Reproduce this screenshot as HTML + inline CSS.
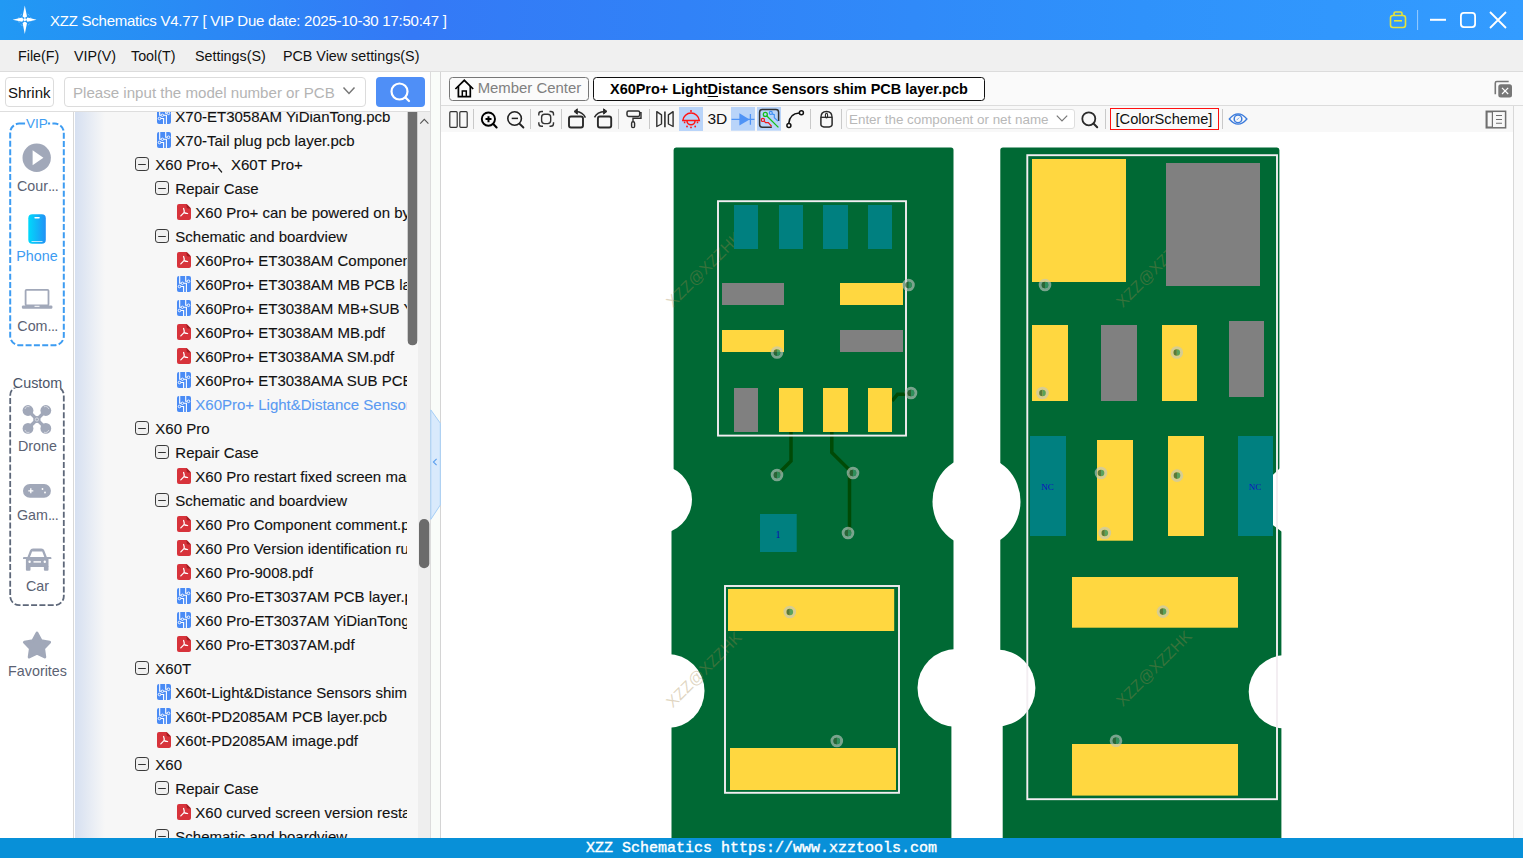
<!DOCTYPE html>
<html><head><meta charset="utf-8">
<style>
*{margin:0;padding:0;box-sizing:border-box}
html,body{width:1523px;height:858px;overflow:hidden;background:#fff;font-family:"Liberation Sans",sans-serif;color:#111}
.a{position:absolute}
svg{position:absolute;overflow:visible}
#title{left:0;top:0;width:1523px;height:40px;background:linear-gradient(to right,#2199f4 0%,#3479f6 27%,#3182f7 45%,#2f92fb 75%,#339cff 100%)}
#title .t{left:50px;top:11.6px;font-size:15px;line-height:17px;color:#fff;white-space:nowrap;letter-spacing:-0.245px}
#menu{left:0;top:40px;width:1523px;height:32px;background:#f0f0f0;border-bottom:1px solid #dcdcdc}
#menu span{position:absolute;top:8px;font-size:14.3px;color:#111;white-space:nowrap}
#srow{left:0;top:72px;width:430px;height:40px;background:#fff;border-bottom:1px solid #dedede}
#strip{left:430px;top:72px;width:11px;height:766px;background:#f9fcf9;border-left:1px solid #dcdcdc;border-right:1px solid #d4d4d4}
#nav{left:0;top:112px;width:74px;height:726px;background:#fff;border-right:1px solid #d8d8d8}
#tree{left:75px;top:112px;width:332px;height:726px;background:#f7f7f7;overflow:hidden}
#treegrad{left:75px;top:112px;width:30px;height:726px;background:linear-gradient(to right,#d6e0f1,#f7f7f7)}
#track{left:407px;top:112px;width:23px;height:726px;background:#f7f7f7}
#track2{left:418px;top:112px;width:12px;height:726px;background:#eeeeee}
#tabbar{left:441px;top:72px;width:1082px;height:34px;background:#fafafa;border-bottom:1px solid #dcdcdc}
#toolbar{left:441px;top:106px;width:1072px;height:26px;background:#f8f8f8}
#rstrip{left:1513px;top:106px;width:10px;height:732px;background:#f9f9f9;border-left:1px solid #d8d8d8}
#status{left:0;top:838px;width:1523px;height:20px;background:#0890d8;color:#fff;font-family:"Liberation Mono",monospace;font-weight:normal;font-size:15px;-webkit-text-stroke:0.4px #fff}
#status span{position:absolute;left:586px;top:2px;line-height:17px;white-space:nowrap}
.row{position:absolute;height:24px;white-space:nowrap;font-size:15px;color:#111}
.row span{position:absolute;top:3px}
.nl{position:absolute;font-size:14.3px;color:#5b6273;white-space:nowrap;text-align:center;width:74px;left:0;line-height:16px}
.tr{position:absolute;font-size:15px;line-height:17px;color:#111;white-space:nowrap;-webkit-text-stroke:0.12px #111}
.tr.sel{color:#5a9af2;-webkit-text-stroke:0.12px #5a9af2}
.ic{position:absolute}
</style></head><body>
<svg width="0" height="0" style="position:absolute">
 <defs>
  <symbol id="pdf" viewBox="0 0 14 16">
   <path d="M2 0 H9.6 L14 4.4 V14 Q14 16 12 16 H2 Q0 16 0 14 V2 Q0 0 2 0Z" fill="#d7333b"/>
   <path d="M9.6 0 L14 4.4 H11 Q9.6 4.4 9.6 3Z" fill="#a31c22"/>
   <path d="M6.6 4.5 Q7.6 7 7 8.6 M7 8.6 L3.8 11.9 M7 8.6 Q9 9.4 10.6 9.5" fill="none" stroke="#fff" stroke-width="1.25" stroke-linecap="round"/>
  </symbol>
  <symbol id="pcbi" viewBox="0 0 14 16">
   <rect width="14" height="16" rx="2" fill="#4a8bf5"/>
   <path d="M2.7 0 V7.3 H9.4 V16 M8.7 0 V5.2 H10.3 M2.5 10.5 H6.6 V16" stroke="#fff" stroke-width="1.1" fill="none"/>
   <circle cx="5.4" cy="7.3" r="1.2" fill="#4a8bf5" stroke="#fff" stroke-width=".9"/>
   <circle cx="11.5" cy="5.3" r="1.3" fill="#4a8bf5" stroke="#fff" stroke-width=".9"/>
   <circle cx="2.5" cy="10.5" r="1.3" fill="#4a8bf5" stroke="#fff" stroke-width=".9"/>
  </symbol>
  <symbol id="mbox" viewBox="0 0 14 14">
   <rect x=".5" y=".5" width="13" height="13" rx="2.6" fill="#f0f0f0" stroke="#3a3a3a" stroke-width="1"/>
   <path d="M3.2 7.5 H10.8" stroke="#333" stroke-width="1"/>
  </symbol>
 </defs>
</svg>

<!-- TITLE -->
<div id="title" class="a">
<svg width="30" height="32" style="left:10px;top:4px" viewBox="0 0 30 32">
 <circle cx="14.8" cy="15.7" r="6.3" fill="none" stroke="rgba(255,255,255,.35)" stroke-width="1" stroke-dasharray="2 2"/>
 <path d="M14.8 1.5 L17 12.5 L14.8 14 L12.6 12.5Z M14.8 30 L17 19 L14.8 17.4 L12.6 19Z M2.6 15.7 L12.2 13.6 L13.6 15.7 L12.2 17.8Z M26.6 15.7 L17.4 13.6 L16 15.7 L17.4 17.8Z" fill="#fff"/>
 <circle cx="14.8" cy="15.7" r="1.4" fill="#fff"/>
</svg>
<div class="a t">XZZ Schematics V4.77 [ VIP Due date: 2025-10-30 17:50:47 ]</div>
<svg width="133" height="40" style="left:1385px;top:0" viewBox="0 0 133 40">
 <rect x="5.5" y="15.5" width="15" height="12" rx="2.5" fill="none" stroke="#e6e43a" stroke-width="1.6"/>
 <path d="M9 15.5 V13.5 Q9 12 10.5 12 H15.5 Q17 12 17 13.5 V15.5" fill="none" stroke="#e6e43a" stroke-width="1.6"/>
 <path d="M9 20.8 H17" stroke="#e6e43a" stroke-width="1.6"/>
 <path d="M32.6 10 V30" stroke="rgba(255,255,255,.5)" stroke-width="1"/>
 <path d="M45 19.8 H61" stroke="#fff" stroke-width="2"/>
 <rect x="75.9" y="12.9" width="14.2" height="14.2" rx="3" fill="none" stroke="#fff" stroke-width="1.8"/>
 <path d="M105 12 L121 28 M121 12 L105 28" stroke="#fff" stroke-width="1.8"/>
</svg>
</div>
<!-- MENU -->
<div id="menu" class="a">
 <span style="left:18px">File(F)</span>
 <span style="left:74px">VIP(V)</span>
 <span style="left:131px">Tool(T)</span>
 <span style="left:195px">Settings(S)</span>
 <span style="left:283px">PCB View settings(S)</span>
</div>
<!-- SEARCH ROW -->
<div id="srow" class="a">
 <div class="a" style="left:5px;top:5px;width:49px;height:30px;border:1px solid #dcdcdc;border-radius:4px;background:#fff"></div>
 <div class="a" style="left:8px;top:12px;font-size:15px;color:#111">Shrink</div>
 <div class="a" style="left:64px;top:5px;width:302px;height:30px;border:1px solid #dcdcdc;border-radius:4px;background:#fff;overflow:hidden">
  <div class="a" style="left:8px;top:6px;font-size:15.1px;color:#b4b4b4;white-space:nowrap;width:262px;overflow:hidden">Please input the model number or PCB</div>
 </div>
 <svg width="14" height="10" style="left:342px;top:14px" viewBox="0 0 14 10"><path d="M1.5 1.5 L7 7.5 L12.5 1.5" fill="none" stroke="#777" stroke-width="1.5"/></svg>
 <div class="a" style="left:376px;top:5px;width:49px;height:30px;border-radius:4px;background:#4f8ff7"></div>
 <svg width="24" height="24" style="left:388px;top:8px" viewBox="0 0 24 24"><circle cx="11.5" cy="11.5" r="8" fill="none" stroke="#fff" stroke-width="2.2"/><path d="M17.5 17.5 L21 21" stroke="#fff" stroke-width="2.2" stroke-linecap="round"/></svg>
</div>
<div id="strip" class="a"></div>
<!-- NAV -->
<div id="nav" class="a">
<svg width="74" height="726" style="left:0;top:0" viewBox="0 112 74 726">
 <rect x="10.2" y="123.6" width="53.6" height="221.6" rx="9" fill="none" stroke="#3d9cf2" stroke-width="2" stroke-dasharray="6 2.3"/>
 <rect x="25.3" y="114" width="22.6" height="16" fill="#fff"/>
 <rect x="10.2" y="386.4" width="53.6" height="218.8" rx="9" fill="none" stroke="#5d6779" stroke-width="1.8" stroke-dasharray="6 2.3"/>
 <rect x="12.3" y="375" width="49.6" height="12.6" fill="#fff"/>
 <!-- play -->
 <circle cx="36.7" cy="157.7" r="14.2" fill="#a1a8b9"/>
 <path d="M32.6 150.2 L43.4 157.7 L32.6 165.2Z" fill="#fff"/>
 <!-- phone -->
 <defs><linearGradient id="phg" x1="0" x2="1" y1="0" y2="0"><stop offset="0" stop-color="#00d9fb"/><stop offset="1" stop-color="#2291f5"/></linearGradient></defs>
 <rect x="28.3" y="214.3" width="17.5" height="29.4" rx="4" fill="url(#phg)"/>
 <rect x="34.3" y="217" width="5.5" height="1.6" rx=".8" fill="#fff"/>
 <rect x="31.5" y="241" width="11" height=".9" fill="#cfefff"/>
 <!-- laptop -->
 <rect x="25.6" y="289.8" width="22.9" height="15.5" rx="1" fill="none" stroke="#a1a8b9" stroke-width="1.8"/>
 <rect x="21.9" y="305.4" width="30.5" height="3.3" rx="1.2" fill="#a1a8b9"/>
 <rect x="34.5" y="305.8" width="5" height="1" fill="#fff"/>
 <!-- drone -->
 <g fill="#a1a8b9">
  <path d="M28 410.5 L46 428.5 M46 410.5 L28 428.5" stroke="#a1a8b9" stroke-width="3.2"/>
  <circle cx="28" cy="410.5" r="5.4"/><circle cx="45.8" cy="410.5" r="5.4"/>
  <circle cx="28" cy="428.4" r="5.4"/><circle cx="45.8" cy="428.4" r="5.4"/>
  <circle cx="36.9" cy="419.5" r="3.6"/>
 </g>
 <g fill="none" stroke="#dfe2e9" stroke-width=".8">
  <path d="M25 409 A3.5 3.5 0 0 1 29.5 406.8"/><path d="M44 406.8 A3.5 3.5 0 0 1 48.8 409"/>
  <path d="M25 430 A3.5 3.5 0 0 0 29.5 432.2"/><path d="M44 432.2 A3.5 3.5 0 0 0 48.8 430"/>
  <circle cx="36.9" cy="419.5" r="1.6"/>
 </g>
 <!-- gamepad -->
 <rect x="23" y="484" width="27.9" height="13.7" rx="6.8" fill="#a1a8b9"/>
 <path d="M28.3 490.8 H33.3 M30.8 488.3 V493.3" stroke="#fff" stroke-width="1.3"/>
 <circle cx="42.5" cy="489" r=".9" fill="#fff"/><circle cx="45" cy="492.5" r=".9" fill="#fff"/>
 <!-- car -->
 <path d="M27.5 557 L30 550.5 Q30.7 548.5 33 548.5 H41.3 Q43.6 548.5 44.3 550.5 L46.8 557 H50.4 Q51.4 557 51.4 558 V559 H48.5 V567 H25.9 V559 H23 V558 Q23 557 24 557Z M30 557 H44.3 L42.2 551.5 H32.1Z" fill="#a1a8b9" fill-rule="evenodd"/>
 <rect x="25.9" y="566" width="4.6" height="4.7" rx="1" fill="#a1a8b9"/><rect x="43.9" y="566" width="4.6" height="4.7" rx="1" fill="#a1a8b9"/>
 <circle cx="29.6" cy="561.8" r="1.2" fill="#fff"/><circle cx="44.8" cy="561.8" r="1.2" fill="#fff"/>
 <rect x="33.5" y="561.2" width="7.5" height="1.4" fill="#fff"/>
 <!-- star -->
 <path d="M37.00 633.10 L41.06 640.72 L49.55 642.22 L43.56 648.43 L44.76 656.98 L37.00 653.20 L29.24 656.98 L30.44 648.43 L24.45 642.22 L32.94 640.72Z" fill="#a1a8b9" stroke="#a1a8b9" stroke-width="3" stroke-linejoin="round"/>
</svg>
<div class="nl" style="top:3.6px;color:#3d9cf2;font-size:13.5px">VIP</div>
<div class="nl" style="top:66px;left:0.5px">Cour<span style="letter-spacing:-0.6px">...</span></div>
<div class="nl" style="top:136px;color:#3d9cf2">Phone</div>
<div class="nl" style="top:206px;left:0.5px">Com<span style="letter-spacing:-0.6px">...</span></div>
<div class="nl" style="top:263px;left:0.5px;color:#4b5468">Custom</div>
<div class="nl" style="top:326px;left:0.5px">Drone</div>
<div class="nl" style="top:395px;left:0.5px">Gam<span style="letter-spacing:-0.6px">...</span></div>
<div class="nl" style="top:466px;left:0.5px">Car</div>
<div class="nl" style="top:551px;left:0.5px">Favorites</div>

</div>
<!-- TREE -->
<div id="tree" class="a">
<svg class="ic" width="14" height="16" style="left:82px;top:-4px"><use href="#pcbi"/></svg>
<div class="tr" style="left:100.3px;top:-3.7px">X70-ET3058AM YiDianTong.pcb</div>
<svg class="ic" width="14" height="16" style="left:82px;top:20px"><use href="#pcbi"/></svg>
<div class="tr" style="left:100.3px;top:20.3px">X70-Tail plug pcb layer.pcb</div>
<svg class="ic" width="14" height="14" style="left:60px;top:45px"><use href="#mbox"/></svg>
<div class="tr" style="left:80.3px;top:44.3px">X60 Pro+</div>
<svg class="ic" width="8" height="8" style="left:142px;top:54.5px"><path d="M1.6 1.4 L4.6 5" stroke="#222" stroke-width="1.3" stroke-linecap="round"/></svg>
<div class="tr" style="left:156px;top:44.3px">X60T Pro+</div>
<svg class="ic" width="14" height="14" style="left:80px;top:69px"><use href="#mbox"/></svg>
<div class="tr" style="left:100.3px;top:68.3px">Repair Case</div>
<svg class="ic" width="14" height="16" style="left:102px;top:92px"><use href="#pdf"/></svg>
<div class="tr" style="left:120.3px;top:92.3px">X60 Pro+ can be powered on by the charger but not boot</div>
<svg class="ic" width="14" height="14" style="left:80px;top:117px"><use href="#mbox"/></svg>
<div class="tr" style="left:100.3px;top:116.3px">Schematic and boardview</div>
<svg class="ic" width="14" height="16" style="left:102px;top:140px"><use href="#pdf"/></svg>
<div class="tr" style="left:120.3px;top:140.3px">X60Pro+ ET3038AM Component comment.pdf</div>
<svg class="ic" width="14" height="16" style="left:102px;top:164px"><use href="#pcbi"/></svg>
<div class="tr" style="left:120.3px;top:164.3px">X60Pro+ ET3038AM MB PCB layer.pcb</div>
<svg class="ic" width="14" height="16" style="left:102px;top:188px"><use href="#pcbi"/></svg>
<div class="tr" style="left:120.3px;top:188.3px">X60Pro+ ET3038AM MB+SUB YiDianTong.pcb</div>
<svg class="ic" width="14" height="16" style="left:102px;top:212px"><use href="#pdf"/></svg>
<div class="tr" style="left:120.3px;top:212.3px">X60Pro+ ET3038AM MB.pdf</div>
<svg class="ic" width="14" height="16" style="left:102px;top:236px"><use href="#pdf"/></svg>
<div class="tr" style="left:120.3px;top:236.3px">X60Pro+ ET3038AMA SM.pdf</div>
<svg class="ic" width="14" height="16" style="left:102px;top:260px"><use href="#pcbi"/></svg>
<div class="tr" style="left:120.3px;top:260.3px">X60Pro+ ET3038AMA SUB PCB layer.pcb</div>
<svg class="ic" width="14" height="16" style="left:102px;top:284px"><use href="#pcbi"/></svg>
<div class="tr sel" style="left:120.3px;top:284.3px">X60Pro+ Light&amp;Distance Sensors shim PCB layer.pcb</div>
<svg class="ic" width="14" height="14" style="left:60px;top:309px"><use href="#mbox"/></svg>
<div class="tr" style="left:80.3px;top:308.3px">X60 Pro</div>
<svg class="ic" width="14" height="14" style="left:80px;top:333px"><use href="#mbox"/></svg>
<div class="tr" style="left:100.3px;top:332.3px">Repair Case</div>
<svg class="ic" width="14" height="16" style="left:102px;top:356px"><use href="#pdf"/></svg>
<div class="tr" style="left:120.3px;top:356.3px">X60 Pro restart fixed screen main board</div>
<svg class="ic" width="14" height="14" style="left:80px;top:381px"><use href="#mbox"/></svg>
<div class="tr" style="left:100.3px;top:380.3px">Schematic and boardview</div>
<svg class="ic" width="14" height="16" style="left:102px;top:404px"><use href="#pdf"/></svg>
<div class="tr" style="left:120.3px;top:404.3px">X60 Pro Component comment.pdf</div>
<svg class="ic" width="14" height="16" style="left:102px;top:428px"><use href="#pdf"/></svg>
<div class="tr" style="left:120.3px;top:428.3px">X60 Pro Version identification rules.pdf</div>
<svg class="ic" width="14" height="16" style="left:102px;top:452px"><use href="#pdf"/></svg>
<div class="tr" style="left:120.3px;top:452.3px">X60 Pro-9008.pdf</div>
<svg class="ic" width="14" height="16" style="left:102px;top:476px"><use href="#pcbi"/></svg>
<div class="tr" style="left:120.3px;top:476.3px">X60 Pro-ET3037AM PCB layer.pcb</div>
<svg class="ic" width="14" height="16" style="left:102px;top:500px"><use href="#pcbi"/></svg>
<div class="tr" style="left:120.3px;top:500.3px">X60 Pro-ET3037AM YiDianTong.pcb</div>
<svg class="ic" width="14" height="16" style="left:102px;top:524px"><use href="#pdf"/></svg>
<div class="tr" style="left:120.3px;top:524.3px">X60 Pro-ET3037AM.pdf</div>
<svg class="ic" width="14" height="14" style="left:60px;top:549px"><use href="#mbox"/></svg>
<div class="tr" style="left:80.3px;top:548.3px">X60T</div>
<svg class="ic" width="14" height="16" style="left:82px;top:572px"><use href="#pcbi"/></svg>
<div class="tr" style="left:100.3px;top:572.3px">X60t-Light&amp;Distance Sensors shim PCB layer.pcb</div>
<svg class="ic" width="14" height="16" style="left:82px;top:596px"><use href="#pcbi"/></svg>
<div class="tr" style="left:100.3px;top:596.3px">X60t-PD2085AM PCB layer.pcb</div>
<svg class="ic" width="14" height="16" style="left:82px;top:620px"><use href="#pdf"/></svg>
<div class="tr" style="left:100.3px;top:620.3px">X60t-PD2085AM image.pdf</div>
<svg class="ic" width="14" height="14" style="left:60px;top:645px"><use href="#mbox"/></svg>
<div class="tr" style="left:80.3px;top:644.3px">X60</div>
<svg class="ic" width="14" height="14" style="left:80px;top:669px"><use href="#mbox"/></svg>
<div class="tr" style="left:100.3px;top:668.3px">Repair Case</div>
<svg class="ic" width="14" height="16" style="left:102px;top:692px"><use href="#pdf"/></svg>
<div class="tr" style="left:120.3px;top:692.3px">X60 curved screen version restart</div>
<svg class="ic" width="14" height="14" style="left:80px;top:717px"><use href="#mbox"/></svg>
<div class="tr" style="left:100.3px;top:716.3px">Schematic and boardview</div>
</div>
<div id="treegrad" class="a"></div>
<div id="track" class="a"></div>
<div id="track2" class="a"></div>
<!-- SCROLLBARS & COLLAPSE TABS -->
<svg width="1523" height="858" style="left:0;top:0" viewBox="0 0 1523 858">
 <path d="M407.7 112 H417.3 V340.5 Q417.3 345.3 412.5 345.3 Q407.7 345.3 407.7 340.5Z" fill="#6e6e6e"/>
 <path d="M420.2 123.6 L424.3 119.4 L428.4 123.6" fill="none" stroke="#555" stroke-width="1.1"/>
 <rect x="419" y="519" width="10.3" height="49.3" rx="5.1" fill="#6b6b6b"/>
 <path d="M430.8 409.9 L440.3 423.2 V505 L430.8 519.4Z" fill="#d9eafc" stroke="#a5cff7" stroke-width="1"/>
 <path d="M436.6 458.8 L433.4 462 L436.6 465.2" fill="none" stroke="#5b9fee" stroke-width="1.1"/>
 <path d="M1522.5 431.7 L1513.8 444.8 V528.7 L1522.5 540.9Z" fill="#d9eafc" stroke="#8fc5f7" stroke-width="1"/>
 <path d="M1519.6 485 L1516.3 488.2 L1519.6 491.4" fill="none" stroke="#4a90e8" stroke-width="1.2"/>
</svg>
<!-- TABBAR -->
<div id="tabbar" class="a"></div>
<div id="toolbar" class="a"></div>
<div id="rstrip" class="a"></div>
<!-- TABS -->
<div class="a" style="left:449px;top:77px;width:139.5px;height:24px;border:1px solid #777;border-radius:3.5px;background:#fbfbfb"></div>
<div class="a" style="left:477.7px;top:80px;font-size:14.9px;color:#808080;white-space:nowrap;line-height:17px">Member Center</div>
<div class="a" style="left:593px;top:77px;width:392px;height:24px;border:1.3px solid #111;border-radius:3.5px;background:#fff"></div>
<div class="a" style="left:610px;top:80.5px;font-size:14.46px;font-weight:bold;color:#000;white-space:nowrap;line-height:17px">X60Pro+ Light<u style="text-decoration-thickness:1px;text-underline-offset:2px">D</u>istance Sensors shim PCB layer.pcb</div>
<!-- toolbar input -->
<div class="a" style="left:845.5px;top:109px;width:229px;height:20px;border:1px solid #dedede;border-radius:3px;background:#fff;overflow:hidden">
 <div class="a" style="left:2.5px;top:1.5px;font-size:13.4px;color:#b8b8b8;white-space:nowrap;width:201px;overflow:hidden;line-height:15px">Enter the component or net name to search</div>
</div>
<div class="a" style="left:1110px;top:108px;width:109px;height:21.6px;border:1.5px solid #ff1010;background:#fafafa"></div>
<div class="a" style="left:1115.5px;top:111px;font-size:14.67px;color:#111;white-space:nowrap;line-height:17px">[ColorScheme]</div>
<div class="a" style="left:707.5px;top:110px;font-size:15.5px;color:#111;white-space:nowrap;line-height:17px">3D</div>
<svg width="1523" height="140" style="left:0;top:0" viewBox="0 0 1523 140">
 <!-- house -->
 <path d="M455.4 89 L464.3 80.3 L473.2 89" fill="none" stroke="#000" stroke-width="1.7" stroke-linejoin="miter"/>
 <path d="M458.4 86 V96.7 H470.3 V86" fill="none" stroke="#000" stroke-width="1.7"/>
 <path d="M462.3 96.7 V91 H466.3 V96.7" fill="none" stroke="#000" stroke-width="1.5"/>
 <!-- close all -->
 <path d="M1495.3 94.3 V83 Q1495.3 81.5 1496.8 81.5 H1508.7" fill="none" stroke="#777" stroke-width="1.6"/>
 <rect x="1498.3" y="84.2" width="13.7" height="13.3" rx="2.5" fill="#777"/>
 <path d="M1502 87.8 L1508.2 94 M1508.2 87.8 L1502 94" stroke="#fff" stroke-width="1.2"/>
 <!-- separators -->
 <g stroke="#c9c9c9" stroke-width="1">
  <path d="M473.5 109 V129"/><path d="M530.5 109 V129"/><path d="M561.5 109 V129"/><path d="M618.5 109 V129"/><path d="M649.5 109 V129"/>
  <path d="M810.5 109 V129"/><path d="M841.5 109 V129"/><path d="M1105.5 109 V129"/><path d="M1222.5 109 V129"/>
 </g>
 <!-- split -->
 <rect x="449.8" y="111.7" width="7.4" height="15.6" rx="1" fill="none" stroke="#333" stroke-width="1.2"/>
 <rect x="459.8" y="111.7" width="7.4" height="15.6" rx="1" fill="none" stroke="#333" stroke-width="1.2"/>
 <!-- zoom in -->
 <circle cx="488.4" cy="119.1" r="6.6" fill="none" stroke="#000" stroke-width="1.9"/>
 <path d="M485.5 119.1 H491.5 M488.5 116.2 V122.2" stroke="#000" stroke-width="2"/>
 <path d="M493.3 124.1 L496.6 127.4" stroke="#000" stroke-width="2.1" stroke-linecap="round"/>
 <!-- zoom out -->
 <circle cx="514.6" cy="118.5" r="6.8" fill="none" stroke="#222" stroke-width="1.6"/>
 <path d="M511.7 118.4 H518" stroke="#222" stroke-width="1.5"/>
 <path d="M519.8 124 L523.4 127.5" stroke="#222" stroke-width="1.9" stroke-linecap="round"/>
 <!-- fit -->
 <g fill="none" stroke="#333" stroke-width="1.4">
  <path d="M538.8 115.5 V114 Q538.8 111.5 541.5 111.5 H543"/>
  <path d="M549.5 111.5 H550.8 Q553.5 111.5 553.5 114 V115.5"/>
  <path d="M538.8 122.2 V123.5 Q538.8 126.3 541.5 126.3 H543"/>
  <path d="M549.5 126.3 H550.8 Q553.5 126.3 553.5 123.5 V122.2"/>
  <rect x="541.6" y="114.3" width="9.1" height="9.3" rx="3"/>
 </g>
 <!-- rotate L -->
 <rect x="569" y="116.5" width="14" height="11" rx="2" fill="none" stroke="#2a2a2a" stroke-width="1.9"/>
 <path d="M585.4 117.6 Q583 112 576 111.5" fill="none" stroke="#2a2a2a" stroke-width="1.5"/>
 <path d="M574 111.5 L577.3 108.8 L577.3 114.2Z" fill="#2a2a2a" stroke="#2a2a2a" stroke-width="1" stroke-linejoin="round"/>
 <!-- rotate R -->
 <rect x="597.9" y="116.5" width="13.3" height="11" rx="2" fill="none" stroke="#2a2a2a" stroke-width="1.9"/>
 <path d="M594.5 117.4 Q597 112 605 111.5" fill="none" stroke="#2a2a2a" stroke-width="1.5"/>
 <path d="M607 111.4 L603.6 108.8 L603.6 114.1Z" fill="#2a2a2a" stroke="#2a2a2a" stroke-width="1" stroke-linejoin="round"/>
 <!-- roller -->
 <rect x="627" y="110.9" width="12.7" height="5.5" rx="1.6" fill="none" stroke="#2f2f2f" stroke-width="1.5"/>
 <path d="M639.7 112.6 H641 V118.2 H633 V121.8" fill="none" stroke="#2f2f2f" stroke-width="1.4"/>
 <rect x="631.6" y="121.8" width="3" height="5.8" rx="1.4" fill="none" stroke="#2f2f2f" stroke-width="1.4"/>
 <!-- mirror -->
 <path d="M656.8 111.6 L661.5 114.8 V124 L656.8 126.5Z" fill="none" stroke="#2f2f2f" stroke-width="1.4" stroke-linejoin="round"/>
 <path d="M664.9 111.6 V127.2" stroke="#444" stroke-width="1.8"/>
 <path d="M673.1 111.6 L668.4 114.8 V124 L673.1 126.5Z" fill="none" stroke="#2f2f2f" stroke-width="1.4" stroke-linejoin="round"/>
 <!-- highlighted bg -->
 <rect x="679" y="107" width="24" height="24" fill="#b9d4f9"/>
 <rect x="731" y="107" width="24" height="23.7" fill="#b9d4f9"/>
 <rect x="757" y="107" width="24" height="23.7" fill="#b9d4f9"/>
 <!-- lamp -->
 <g fill="none" stroke="#ff1515" stroke-width="1.5">
  <path d="M682.8 120.5 A8.3 8.3 0 0 1 699.3 120.5 Z"/>
  <path d="M687 121 A4 3.8 0 0 0 695 121"/>
  <path d="M684.6 121.5 V123.2 M697.5 121.5 V123.2"/>
 </g>
 <circle cx="691" cy="111" r="1" fill="#ff1515"/>
 <circle cx="687" cy="126.5" r=".9" fill="#ff1515"/><circle cx="691" cy="127.4" r=".9" fill="#ff1515"/><circle cx="695.2" cy="126.5" r=".9" fill="#ff1515"/>
 <!-- diode -->
 <path d="M731.5 119.4 H754.5 M750.4 114 V124.8" stroke="#4f93f6" stroke-width="1.3"/>
 <path d="M739.4 113.2 L749.6 119.4 L739.4 125.6Z" fill="#4f93f6"/>
 <!-- layer icon -->
 <path d="M778.6 121 V112.3 Q778.6 109.6 775.9 109.6 H762.3 Q759.6 109.6 759.6 112.3 V124.5 Q759.6 127.2 762.3 127.2 H771.8" fill="none" stroke="#333" stroke-width="1.5"/>
 <circle cx="765.3" cy="114.4" r="2" fill="none" stroke="#16c016" stroke-width="1.3"/>
 <path d="M766.6 115.8 L778.4 127.4" stroke="#16c016" stroke-width="1.3"/>
 <circle cx="770.8" cy="112.9" r="1.5" fill="none" stroke="#3b8ff5" stroke-width="1.1"/>
 <path d="M772 113.9 L774.3 114.6 V117.7 L778 121.2" fill="none" stroke="#3b8ff5" stroke-width="1.1"/>
 <circle cx="762.9" cy="119.9" r="1.6" fill="none" stroke="#f01818" stroke-width="1.2"/>
 <path d="M764.2 121.2 L765.6 122.6 H768.3 L771.7 126.4" fill="none" stroke="#f01818" stroke-width="1.2"/>
 <!-- curve -->
 <path d="M788.8 123.4 Q789.5 113.5 799.2 112.9" fill="none" stroke="#111" stroke-width="1.5"/>
 <circle cx="788.9" cy="125.6" r="2" fill="#fff" stroke="#111" stroke-width="1.5"/>
 <circle cx="801.4" cy="112.8" r="2" fill="#fff" stroke="#111" stroke-width="1.5"/>
 <!-- mouse -->
 <path d="M820.9 117.5 V124.5 Q820.9 127.1 826.5 127.1 Q832.1 127.1 832.1 124.5 V117.5 Q832.1 111.6 826.5 111.6 Q820.9 111.6 820.9 117.5Z" fill="none" stroke="#2a2a2a" stroke-width="1.5"/>
 <path d="M820.9 117.3 H832.1" stroke="#2a2a2a" stroke-width="1.3"/>
 <ellipse cx="826.5" cy="115.6" rx="1.1" ry="2.4" fill="none" stroke="#2a2a2a" stroke-width="1.1"/>
 <!-- chevron -->
 <path d="M1056.8 115.6 L1062 121 L1067.2 115.6" fill="none" stroke="#777" stroke-width="1.2"/>
 <!-- search -->
 <circle cx="1088.8" cy="118.8" r="6.5" fill="none" stroke="#2a2a2a" stroke-width="1.8"/>
 <path d="M1093.5 123.5 L1097.2 127.2" stroke="#2a2a2a" stroke-width="2" stroke-linecap="round"/>
 <!-- eye -->
 <path d="M1229.3 119 Q1238.1 108.6 1246.9 119 Q1238.1 129.4 1229.3 119Z" fill="none" stroke="#3b7bdc" stroke-width="1.3"/>
 <circle cx="1238" cy="118.9" r="3.8" fill="none" stroke="#3b7bdc" stroke-width="1.5"/>
 <path d="M1236.7 120.1 L1239.2 117.6" stroke="#6d9ce6" stroke-width=".9"/>
 <!-- panel toggle -->
 <rect x="1486.3" y="111.3" width="19.3" height="16.5" fill="none" stroke="#6f6f6f" stroke-width="1.5"/>
 <path d="M1487 112 H1492.4 V127 H1487Z" fill="none" stroke="#6f6f6f" stroke-width="1.2"/>
 <path d="M1496 115.5 H1502 M1496 119.5 H1502 M1496 123.3 H1502" stroke="#6f6f6f" stroke-width="1.1"/>
</svg>

<!-- CANVAS -->
<svg id="pcb" width="1523" height="858" style="left:0;top:0" viewBox="0 0 1523 858">
 <defs>
  <clipPath id="cv"><rect x="441" y="132" width="1072" height="706"/></clipPath>
  <g id="via"><circle r="4.8" fill="none" stroke="rgba(192,199,193,.63)" stroke-width="3"/><path d="M0 -3.3 A3.3 3.3 0 0 0 0 3.3Z" fill="rgba(52,100,56,.82)"/><path d="M0 -3.3 A3.3 3.3 0 0 1 0 3.3Z" fill="rgba(55,150,100,.83)"/></g>
 </defs>
 <g clip-path="url(#cv)">
 <!-- boards -->
 <path d="M676 147.5 H951 Q953.5 147.5 953.5 150 V688 H951.4 V838 H671.5 V499.5 H673.6 V150 Q673.6 147.5 676 147.5Z" fill="#006934"/>
 <path d="M1003 147.5 H1277 Q1279.4 147.5 1279.4 150 V500 H1281.4 V838 H1002.7 V688 H1000.3 V150 Q1000.3 147.5 1003 147.5Z" fill="#006934"/>
 <!-- notches -->
 <circle cx="657.3" cy="499.5" r="34.7" fill="#fff"/>
 <circle cx="667.5" cy="691" r="37" fill="#fff"/>
 <ellipse cx="976.5" cy="501.4" rx="44" ry="45.7" fill="#fff"/>
 <circle cx="956.4" cy="688" r="38.9" fill="#fff"/>
 <circle cx="996.9" cy="688" r="38.5" fill="#fff"/>
 <path d="M1279.6 468.5 L1272.8 475 V525 L1281.5 531.5 H1300 V468.5Z" fill="#fff"/>
 <circle cx="1285.4" cy="691.8" r="36.7" fill="#fff"/>
 <!-- watermarks -->
 <g font-family="Liberation Sans" font-size="16" fill="rgba(165,135,75,.34)" text-anchor="middle">
  <text transform="translate(703.5 269) rotate(-45)" y="6">XZZ@XZZHK</text>
  <text transform="translate(703.5 669.3) rotate(-45)" y="6">XZZ@XZZHK</text>
  <text transform="translate(1153.5 269) rotate(-45)" y="6">XZZ@XZZHK</text>
  <text transform="translate(1153.5 668) rotate(-45)" y="6">XZZ@XZZHK</text>
 </g>
 <!-- traces -->
 <g fill="none" stroke="#004a06" stroke-width="3.5" stroke-linejoin="miter">
  <path d="M791 431 V461 L777 475"/>
  <path d="M831.8 431 V452.6 L853 473.5"/>
  <path d="M849.5 473 V533"/>
  <path d="M892 401 L897.5 394.3 H911"/>
 </g>
 <!-- LEFT BOARD -->
 <rect x="718" y="201.2" width="188" height="234.4" fill="none" stroke="#f3eef2" stroke-width="1.9"/>
 <g fill="#008080">
  <rect x="734" y="205" width="24" height="44"/><rect x="779" y="205" width="24" height="44"/>
  <rect x="823" y="205" width="25" height="44"/><rect x="868" y="205" width="24" height="44"/>
  <rect x="760" y="514" width="36.7" height="38"/>
 </g>
 <g fill="#808080">
  <rect x="722" y="283" width="62" height="22"/><rect x="840" y="330" width="63" height="22"/>
  <rect x="734" y="388" width="24" height="44"/>
 </g>
 <g fill="#ffd740">
  <rect x="840" y="283" width="63" height="22"/><rect x="722" y="330" width="62" height="22"/>
  <rect x="779" y="388" width="24" height="44"/><rect x="823" y="388" width="25" height="44"/><rect x="868" y="388" width="24" height="44"/>
 </g>
 <text x="778" y="537.6" font-family="Liberation Serif" font-size="10" fill="#0a0ab4" text-anchor="middle">1</text>
 <use href="#via" x="908.5" y="285"/><use href="#via" x="777" y="352.5"/><use href="#via" x="911" y="393"/>
 <use href="#via" x="777" y="475"/><use href="#via" x="853" y="473"/><use href="#via" x="848" y="533"/>
 <rect x="725" y="586" width="174" height="206.8" fill="none" stroke="#f3eef2" stroke-width="1.9"/>
 <rect x="728" y="589" width="166.2" height="42" fill="#ffd740"/>
 <rect x="730" y="748" width="166" height="42" fill="#ffd740"/>
 <use href="#via" x="789.8" y="612"/><use href="#via" x="836.8" y="741"/>
 <!-- RIGHT BOARD -->
 <rect x="1027.3" y="155.2" width="249.7" height="644" fill="none" stroke="#f3eef2" stroke-width="1.9"/>
 <g fill="#ffd740">
  <rect x="1032" y="159" width="94" height="123"/>
  <rect x="1032" y="325" width="36" height="76"/><rect x="1162" y="325" width="35" height="76"/>
  <rect x="1097" y="440" width="36" height="100.7"/><rect x="1168" y="436" width="36" height="100"/>
  <rect x="1072" y="577" width="166" height="50.7"/><rect x="1072" y="744" width="166" height="51.6"/>
 </g>
 <g fill="#808080">
  <rect x="1166" y="163" width="94" height="123"/>
  <rect x="1101" y="325" width="36" height="76"/><rect x="1229" y="321" width="35" height="76"/>
 </g>
 <g fill="#008080">
  <rect x="1030" y="436" width="36" height="100"/><rect x="1238" y="436" width="35" height="100"/>
 </g>
 <g font-family="Liberation Serif" font-size="9" fill="#1010c0" text-anchor="middle">
  <text x="1047.5" y="489.5">NC</text><text x="1255" y="489.5">NC</text>
 </g>
 <use href="#via" x="1045" y="285"/><use href="#via" x="1042.5" y="393"/><use href="#via" x="1176.8" y="352.5"/>
 <use href="#via" x="1101" y="473"/><use href="#via" x="1104.8" y="533"/><use href="#via" x="1177" y="475.6"/>
 <use href="#via" x="1163" y="611.6"/><use href="#via" x="1116" y="740.7"/>
 </g>
</svg>

<!-- STATUS -->
<div id="status" class="a"><span>XZZ Schematics https://www.xzztools.com</span></div>
</body></html>
